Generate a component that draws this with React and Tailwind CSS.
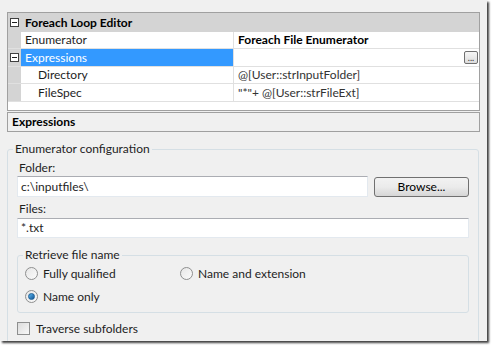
import React from "react";

const font = { fontFamily: 'Lato, "Noto Sans", sans-serif' };

function MinusBox() {
  return (
    <div className="w-[9px] h-[9px] border border-[#404040] bg-white flex items-center justify-center">
      <div className="w-[5px] h-px bg-[#202020]" />
    </div>
  );
}

function Radio({ checked }) {
  return (
    <div className="w-[13px] h-[13px] shrink-0 rounded-full border border-[#8e8f8f] bg-gradient-to-br from-[#e6e6e6] to-[#fbfbfb] flex items-center justify-center">
      {checked && (
        <div className="w-[7px] h-[7px] rounded-full bg-gradient-to-br from-[#59b7f0] to-[#135596] border border-[#1d5f96]" />
      )}
    </div>
  );
}

function Row({ name, value, indent, selected, h, button, boldValue }) {
  return (
    <div className={`flex shrink-0 ${h} border-b border-[#e0e0e0]`}>
      <div className="w-[13px] bg-[#d4d4d4] flex items-center justify-center shrink-0">
        {selected && <MinusBox />}
      </div>
      <div
        className={`w-[213px] shrink-0 flex items-center border-r border-[#e0e0e0] ${
          selected ? "bg-[#3399ff] text-white" : "text-[#1e1e1e]"
        } ${indent ? "pl-[17px]" : "pl-[4px]"}`}
      >
        {name}
      </div>
      <div className={`flex-1 flex items-center pl-[4px] pr-[1px] ${boldValue ? "font-bold text-black" : "text-[#333]"}`}>
        <span className="flex-1">{value}</span>
        {button && (
          <div className="w-[14px] h-[13px] border border-[#707070] rounded-[2px] bg-gradient-to-b from-[#f6f6f6] to-[#dcdcdc] flex items-end justify-center text-[9px] leading-[8px] text-[#333] pb-[1px]">
            ...
          </div>
        )}
      </div>
    </div>
  );
}

export default function App() {
  return (
    <div className="w-[492px] h-[346px] bg-white text-[12px] leading-none" style={font}>
      <div className="w-[487px] h-[341px] bg-[#f0f0f0] overflow-hidden shadow-[2px_2px_2px_rgba(0,0,0,0.75)] pt-[12px] pl-[7px] flex flex-col">
        {/* Property grid */}
        <div className="shrink-0 w-[473px] h-[99px] border border-[#a0a0a0] bg-white flex flex-col">
          <div className="shrink-0 h-[19px] bg-[#d4d4d4] flex items-center">
            <div className="w-[13px] flex items-center justify-center">
              <MinusBox />
            </div>
            <span className="pl-[4px] font-bold text-black">Foreach Loop Editor</span>
          </div>
          <Row h="h-[17px]" name="Enumerator" value="Foreach File Enumerator" boldValue />
          <Row h="h-[18px]" name="Expressions" value="" selected button />
          <Row h="h-[17px]" name="Directory" value="@[User::strInputFolder]" indent />
          <Row h="h-[18px]" name="FileSpec" value={'"*"+ @[User::strFileExt]'} indent />
        </div>

        {/* Description pane */}
        <div className="shrink-0 mt-[1px] w-[473px] h-[20px] border border-[#a0a0a0] flex items-center pl-[4px] font-bold text-black">
          Expressions
        </div>

        {/* Enumerator configuration group */}
        <div className="shrink-0 relative mt-[17px] w-[472px] h-[220px] border border-[#d5dfe5] rounded-[3px] pt-[11px] pl-[9px] pr-[9px] text-[#1e1e1e]">
          <span className="absolute -top-[7px] left-[5px] px-[2px] bg-[#f0f0f0]">Enumerator configuration</span>

          <div className="flex flex-col">
            <div className="pl-[2px] h-[14px] flex items-center">Folder:</div>
            <div className="mt-[1px] flex items-center gap-[6px]">
              <div className="w-[351px] h-[21px] bg-white border border-[#e3e9ef] border-t-[#abadb3] flex items-center pl-[3px]">
                c:\inputfiles\
              </div>
              <div className="w-[95px] h-[20px] border border-[#707070] rounded-[3px] bg-gradient-to-b from-[#f2f2f2] via-[#ebebeb] to-[#d6d6d6] flex items-center justify-center text-black">
                Browse...
              </div>
            </div>

            <div className="mt-[5px] pl-[2px] h-[14px] flex items-center">Files:</div>
            <div className="mt-[2px] w-[452px] h-[20px] bg-white border border-[#e3e9ef] border-t-[#abadb3] flex items-center pl-[3px]">
              *.txt
            </div>

            {/* Retrieve file name group */}
            <div className="relative mt-[17px] w-[452px] h-[58px] border border-[#d5dfe5] rounded-[3px] pt-[11px] pl-[7px]">
              <span className="absolute -top-[7px] left-[5px] px-[2px] bg-[#f0f0f0]">Retrieve file name</span>
              <div className="flex items-center h-[13px]">
                <div className="w-[155px] flex items-center gap-[5px]">
                  <Radio />
                  <span>Fully qualified</span>
                </div>
                <div className="flex items-center gap-[5px]">
                  <Radio />
                  <span>Name and extension</span>
                </div>
              </div>
              <div className="mt-[10px] flex items-center gap-[5px] h-[13px]">
                <Radio checked />
                <span>Name only</span>
              </div>
            </div>

            <div className="mt-[9px] flex items-center gap-[6px] h-[13px]">
              <div className="w-[13px] h-[13px] border border-[#8e8f8f] bg-gradient-to-br from-[#dcdcdc] to-[#f8f8f8]" />
              <span>Traverse subfolders</span>
            </div>
          </div>
        </div>
      </div>
    </div>
  );
}
